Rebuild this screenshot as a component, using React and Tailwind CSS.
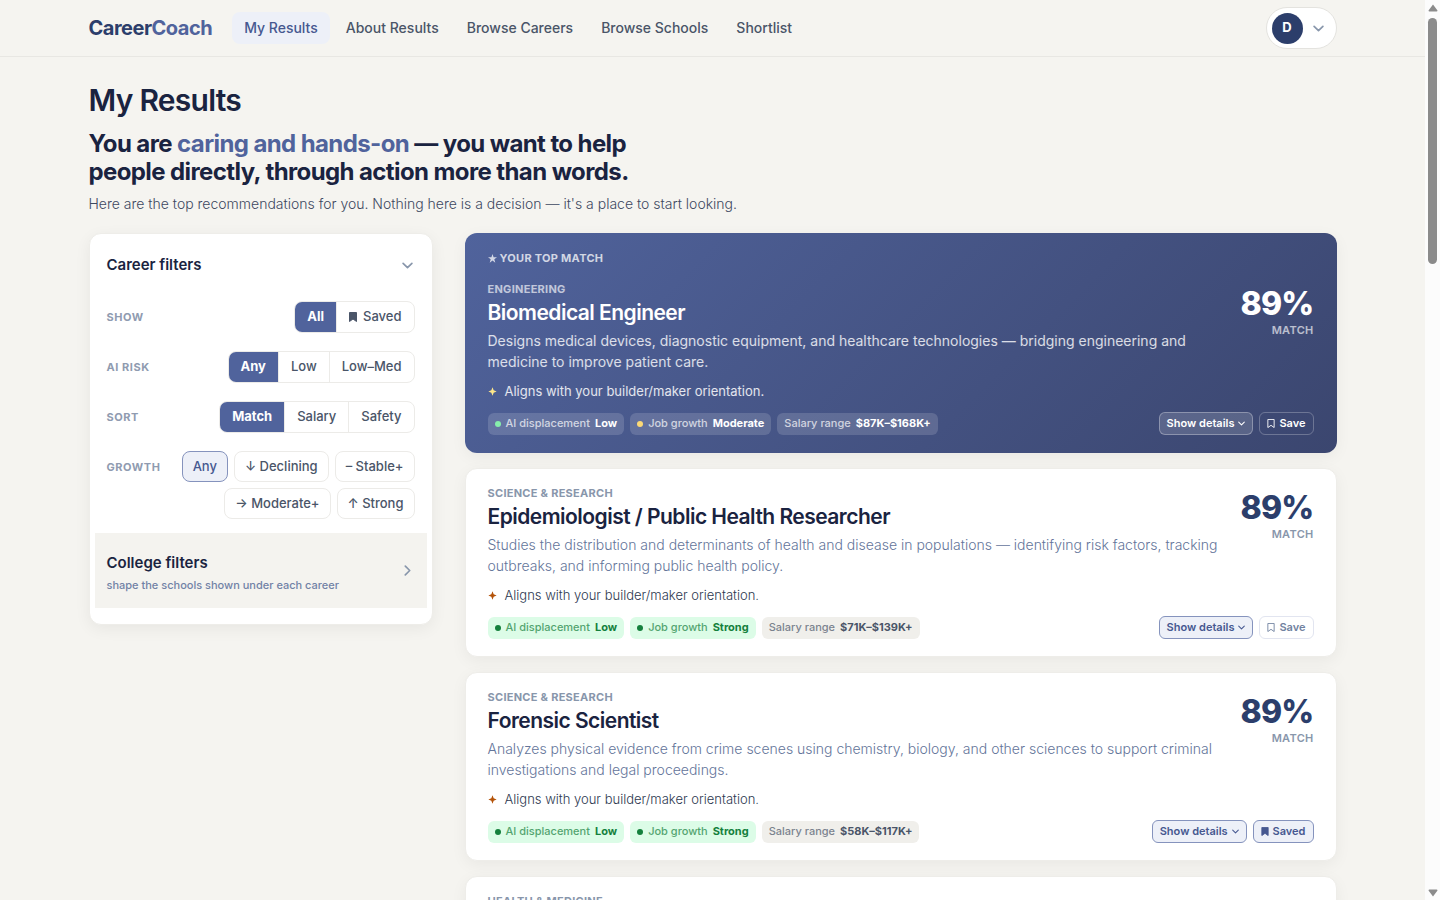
import React, { useState } from "react";
import clsx from "clsx";

const navItems = ["My Results", "About Results", "Browse Careers", "Browse Schools", "Shortlist"];

const careers = [
  {
    field: "Engineering",
    title: "Biomedical Engineer",
    description:
      "Designs medical devices, diagnostic equipment, and healthcare technologies — bridging engineering and medicine to improve patient care.",
    match: 89,
    displacement: "Low",
    growth: "Moderate",
    salary: "$87K–$168K+",
    top: true,
  },
  {
    field: "Science & Research",
    title: "Epidemiologist / Public Health Researcher",
    description:
      "Studies the distribution and determinants of health and disease in populations — identifying risk factors, tracking outbreaks, and informing public health policy.",
    match: 89,
    displacement: "Low",
    growth: "Strong",
    salary: "$71K–$139K+",
  },
  {
    field: "Science & Research",
    title: "Forensic Scientist",
    description:
      "Analyzes physical evidence from crime scenes using chemistry, biology, and other sciences to support criminal investigations and legal proceedings.",
    match: 89,
    displacement: "Low",
    growth: "Strong",
    salary: "$58K–$117K+",
    saved: true,
  },
  {
    field: "Health & Medicine",
    title: "Physical Therapist",
    description:
      "Helps patients recover movement and manage pain after injury or illness through hands-on treatment and exercise.",
    match: 88,
    displacement: "Low",
    growth: "Strong",
    salary: "$74K–$130K+",
  },
];

function Chevron({ className }) {
  return (
    <svg viewBox="0 0 10 10" className={className} fill="none" stroke="currentColor" strokeWidth="1.5" strokeLinecap="round" strokeLinejoin="round" aria-hidden="true">
      <path d="M1 3l4 4 4-4" />
    </svg>
  );
}

function Bookmark({ filled, className }) {
  return (
    <svg viewBox="0 0 8 10" className={className} fill={filled ? "currentColor" : "none"} stroke="currentColor" strokeWidth="1" strokeLinejoin="round" aria-hidden="true">
      <path d="M0.5 0.5h7v9L4 7 0.5 9.5z" />
    </svg>
  );
}

function Star() {
  return (
    <svg viewBox="0 0 10 10" className="size-[9px]" fill="currentColor" aria-hidden="true">
      <path d="M5 0l1.2 3.5H10L7 5.8 8.1 9.6 5 7.3 1.9 9.6 3 5.8 0 3.5h3.8z" />
    </svg>
  );
}

function Spark({ className }) {
  return (
    <svg viewBox="0 0 10 10" className={className} fill="currentColor" aria-hidden="true">
      <path d="M5 0.4L6.3 3.7 9.6 5 6.3 6.3 5 9.6 3.7 6.3 0.4 5 3.7 3.7z" />
    </svg>
  );
}

function Header() {
  return (
    <header className="border-b border-[#e8e7e3]">
      <div className="mx-auto flex h-14 max-w-7xl items-center px-4">
        <a href="#" className="text-xl font-bold tracking-tight text-[#2c3e6b]">
          Career<span className="text-[#50639c]">Coach</span>
        </a>
        <nav className="ml-5 flex gap-1">
          {navItems.map((item, i) => (
            <a
              key={item}
              href="#"
              className={clsx(
                "flex h-8 items-center rounded-lg px-3 text-sm font-medium",
                i === 0 ? "bg-[#edf0f8] text-[#465890]" : "text-[#4a5568]"
              )}
            >
              {item}
            </a>
          ))}
        </nav>
        <button
          type="button"
          aria-label="Account menu"
          className="ml-auto flex h-[42px] w-[71px] items-center rounded-full border border-[#e4e3df] bg-white pl-[5px]"
        >
          <span className="flex size-[31px] items-center justify-center rounded-full bg-[#2c3e6b] text-[13px] font-bold text-white">
            D
          </span>
          <Chevron className="ml-[10px] size-[11px] text-[#8896ab]" />
        </button>
      </div>
    </header>
  );
}

function Segmented({ label, options }) {
  const [value, setValue] = useState(options[0]);
  return (
    <div className="flex items-center justify-between">
      <span className="text-[11px] font-bold tracking-wider text-[#8f9bb0] uppercase">{label}</span>
      <div role="group" aria-label={label} className="flex h-8 divide-x divide-[#ecebe8] overflow-hidden rounded-lg border border-[#ecebe8]">
        {options.map((option) => (
          <button
            key={option}
            type="button"
            aria-pressed={option === value}
            onClick={() => setValue(option)}
            className={clsx(
              "flex items-center gap-[6px] px-3 text-[13px]",
              option === value ? "bg-[#50639c] font-bold text-white" : "font-medium text-[#4a5568]"
            )}
          >
            {option === "Saved" && <Bookmark filled className="h-[10px] w-2" />}
            {option}
          </button>
        ))}
      </div>
    </div>
  );
}

function GrowthFilter() {
  const options = ["Any", "↓ Declining", "– Stable+", "→ Moderate+", "↑ Strong"];
  const [value, setValue] = useState("Any");
  return (
    <div className="flex justify-between">
      <span className="flex h-8 items-center text-[11px] font-bold tracking-wider text-[#8f9bb0] uppercase">Growth</span>
      <div role="group" aria-label="Growth" className="flex flex-1 flex-wrap justify-end gap-[6px]">
        {options.map((option) => (
          <button
            key={option}
            type="button"
            aria-pressed={option === value}
            onClick={() => setValue(option)}
            className={clsx(
              "h-[31px] rounded-lg border px-[10px] text-[13px] font-medium whitespace-nowrap",
              option === value
                ? "border-[#8593bd] bg-[#edf0f8] text-[#465890]"
                : "border-[#ecebe8] text-[#4a5568]"
            )}
          >
            {option}
          </button>
        ))}
      </div>
    </div>
  );
}

function Filters() {
  return (
    <aside className="w-[344px] shrink-0 rounded-xl border border-[#eeede9] bg-white px-[5px] pb-4 shadow-[0_4px_16px_rgba(0,0,0,0.06)]">
      <button type="button" className="flex w-full items-center justify-between px-3 pt-[19px] pb-6 text-[15px] leading-6 font-semibold text-[#1a2340]">
        Career filters
        <Chevron className="mr-[2px] size-[11px] text-[#8896ab]" />
      </button>
      <div className="flex flex-col gap-[18px] px-3 pb-[14px]">
        <Segmented label="Show" options={["All", "Saved"]} />
        <Segmented label="AI risk" options={["Any", "Low", "Low–Med"]} />
        <Segmented label="Sort" options={["Match", "Salary", "Safety"]} />
        <GrowthFilter />
      </div>
      <button type="button" className="flex h-[75px] w-full items-center justify-between bg-[#f4f3ef] px-3 text-left">
        <span className="pt-1">
          <span className="block text-[15px] leading-6 font-semibold text-[#1a2340]">College filters</span>
          <span className="block text-[11px] leading-5 font-medium text-[#7182a6]">shape the schools shown under each career</span>
        </span>
        <Chevron className="mr-[2px] size-[11px] -rotate-90 text-[#8896ab]" />
      </button>
    </aside>
  );
}

function Chip({ label, value, dot, className }) {
  return (
    <li className={clsx("flex h-[22px] items-center rounded-md px-[7px] text-[11px] font-medium", className)}>
      {dot && <span className={clsx("mr-[5px] size-[6px] rounded-full", dot)} />}
      <span className="opacity-70">{label}</span>
      <strong className="ml-[5px] font-bold">{value}</strong>
    </li>
  );
}

function CareerCard({ career }) {
  const { top } = career;
  const [saved, setSaved] = useState(Boolean(career.saved));
  const green = top ? "bg-white/15 text-white" : "bg-[#dcfce7] text-[#15803d]";
  const greenDot = top ? "bg-[#86efac]" : "bg-[#15803d]";

  return (
    <article
      className={clsx(
        "rounded-xl border px-[22px] pt-4 pb-[17px] shadow-[0_4px_16px_rgba(0,0,0,0.05)]",
        top ? "border-transparent bg-linear-135 from-[#50639c] to-[#3b466f] bg-origin-border" : "border-[#eeede9] bg-white"
      )}
    >
      {top && (
        <p className="mb-[15px] flex items-center gap-[3px] text-[11px] leading-4 font-bold tracking-wide text-white/75 uppercase">
          <Star /> Your top match
        </p>
      )}
      <div className="flex items-start justify-between gap-2">
        <div>
          <p className={clsx("text-[11px] leading-4 font-bold tracking-wide uppercase", top ? "text-white/65" : "text-[#8896ab]")}>
            {career.field}
          </p>
          <h3 className={clsx("mt-[2px] text-[21px] leading-7 font-semibold tracking-tight", top ? "text-white" : "text-[#1a2340]")}>
            {career.title}
          </h3>
          <p className={clsx("mt-[3px] text-sm leading-[21px]", top ? "text-white/80" : "font-light text-[#64759a]")}>
            {career.description}
          </p>
        </div>
        <div className="mt-[5px] text-right">
          <p className={clsx("text-[32px] leading-9 font-extrabold tracking-tight", top ? "text-white" : "text-[#2c3e6b]")}>
            {career.match}%
          </p>
          <p className={clsx("text-[11px] leading-4 font-semibold tracking-wide", top ? "text-white/65" : "text-[#8896ab]")}>
            MATCH
          </p>
        </div>
      </div>
      <p className={clsx("mt-[9px] flex items-center gap-2 text-[13px] leading-5", top ? "text-white/85" : "font-light text-[#2d3850]")}>
        <Spark className={clsx("size-[9px]", top ? "text-[#fde68a]" : "text-[#b45309]")} />
        Aligns with your builder/maker orientation.
      </p>
      <div className="mt-[11px] flex items-center justify-between">
        <ul className="flex gap-[6px]">
          <Chip label="AI displacement" value={career.displacement} dot={greenDot} className={green} />
          <Chip label="Job growth" value={career.growth} dot={top ? "bg-[#fcd976]" : greenDot} className={green} />
          <Chip
            label="Salary range"
            value={career.salary}
            className={top ? "bg-white/15 text-white" : "bg-[#f0efeb] text-[#4a5568]"}
          />
        </ul>
        <div className="flex gap-[6px] text-[11px] font-semibold">
          <button
            type="button"
            className={clsx(
              "flex h-[23px] items-center gap-1 rounded-md border px-[7px]",
              top ? "border-white/30 bg-white/15 text-white" : "border-[#8593bd] bg-[#edf0f8] text-[#465890]"
            )}
          >
            Show details
            <Chevron className="size-[7px]" />
          </button>
          <button
            type="button"
            aria-pressed={saved}
            onClick={() => setSaved(!saved)}
            className={clsx(
              "flex h-[23px] items-center gap-1 rounded-md border px-[7px]",
              top && "border-white/25 text-white",
              !top && saved && "border-[#8593bd] bg-[#edf0f8] text-[#465890]",
              !top && !saved && "border-[#e2e5f0] text-[#7182a0]"
            )}
          >
            <Bookmark filled={saved} className="h-[9px] w-2" />
            {saved ? "Saved" : "Save"}
          </button>
        </div>
      </div>
    </article>
  );
}

function ScrollRail() {
  return (
    <div className="flex w-[15px] shrink-0 flex-col items-center bg-[#fcfcfc] text-[#8b8b8b]" aria-hidden="true">
      <svg viewBox="0 0 10 8" className="mt-1 h-2 w-[10px]" fill="currentColor">
        <path d="M5 0.5L9.5 6.5q0 1-1 1h-7q-1 0-1-1z" />
      </svg>
      <div className="mt-[6px] h-[246px] w-[9px] rounded-full bg-[#8b8b8b]" />
      <svg viewBox="0 0 10 8" className="mt-auto mb-[3px] h-2 w-[10px]" fill="currentColor">
        <path d="M5 7.5L0.5 1.5q0-1 1-1h7q1 0 1 1z" />
      </svg>
    </div>
  );
}

export default function App() {
  return (
    <div className="flex h-screen bg-[#f5f4f0] font-[Inter,sans-serif] text-[#1a2340]">
      <div className="min-w-0 flex-1 overflow-hidden">
        <Header />
        <main className="mx-auto max-w-7xl px-4 pt-[23px]">
          <h1 className="text-3xl leading-10 font-semibold tracking-tight">My Results</h1>
          <h2 className="mt-[10px] max-w-[580px] text-2xl leading-7 font-bold tracking-tight">
            You are <span className="text-[#50639c]">caring and hands-on</span> — you want to help people directly,
            through action more than words.
          </h2>
          <p className="mt-2 text-sm leading-5 font-light text-[#3d4860]">
            Here are the top recommendations for you. Nothing here is a decision — it's a place to start looking.
          </p>
          <div className="mt-[19px] flex items-start gap-8">
            <Filters />
            <section aria-label="Recommended careers" className="flex min-w-0 flex-1 flex-col gap-[15px]">
              {careers.map((career) => (
                <CareerCard key={career.title} career={career} />
              ))}
            </section>
          </div>
        </main>
      </div>
      <ScrollRail />
    </div>
  );
}
